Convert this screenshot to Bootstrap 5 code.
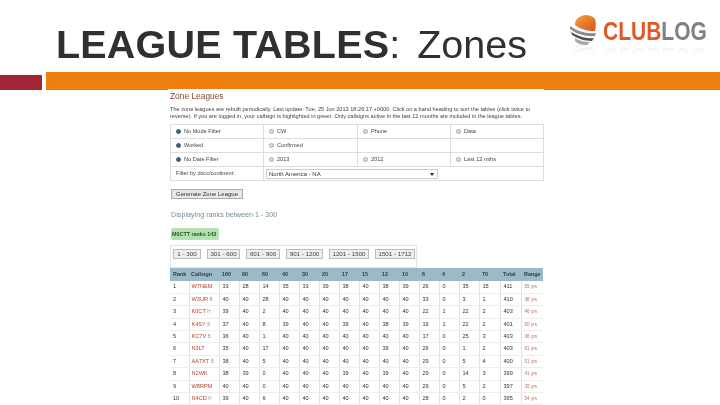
<!DOCTYPE html>
<html lang="en"><head><meta charset="utf-8"><title>League Tables: Zones</title>
<link href="https://cdn.jsdelivr.net/npm/bootstrap@5.3.0/dist/css/bootstrap.min.css" rel="stylesheet">
<style>
html,body{width:720px;height:405px;overflow:hidden;background:#fff;font-family:"Liberation Sans",Arial,sans-serif}
.slide-head{height:72px;padding:18px 14px 0 56px}
.slide-title{font:400 39.5px/52px "Liberation Sans",Arial,sans-serif;color:#303030;margin:0;filter:blur(.3px)}
.slide-title b{font-weight:700;letter-spacing:.2px}
.title-rest{margin-left:17px}
.brand{margin-top:-7px;-webkit-box-reflect:below -6px linear-gradient(transparent 60%,rgba(255,255,255,.16));filter:blur(.35px)}
.rule{height:18px;gap:4px}
.rule-red{width:42px;background:#a32638;height:15px;margin-top:3px}
.rule-orange{background:#ee7f0e;flex:1}
.shot{width:376px;margin-left:168px;background:#fff;padding:0 1px 0 2px;color:#444;font-size:5.6px;line-height:7px;filter:blur(.4px);height:316px;margin-top:-1px;overflow:hidden}
.shot-h{color:#7a4a3a;font-size:8.4px;line-height:10px;margin:0;padding-top:2px}
.shot-p{margin:5px 0 4px;height:14px;white-space:nowrap}
.filter-t{width:373px;table-layout:fixed;margin:0;border-color:#ddd;--bs-table-bg:transparent}
.filter-t td{height:14px;padding:0 0 0 5px;font-size:5.6px;line-height:13px;color:#444;white-space:nowrap}
.filter-t input{width:5px;height:5px;margin:0 3px 0 0;float:none;vertical-align:-.5px;border-color:#aaa;background-color:#ddd}
.filter-t input:checked{background-color:#3f5f72;border-color:#3f5f72;background-image:none}
.filter-t td.sel-cell{padding-left:2px}
.sel{display:block;width:172px;height:10px;margin-top:2px;padding:0 2px;border:1px solid #ccc;line-height:8px;font-size:6px;color:#333;position:relative}
.sel::after{content:"";position:absolute;right:3px;top:3px;border:2px solid transparent;border-top:3px solid #222}
.gen{display:block;margin:8px 0 0 1px;width:72px;height:10px;padding:0;border:1px solid #aaa;border-radius:0;background:#e8e8e8;font-size:6px;line-height:8px;color:#333}
.range-h{color:#6f8f97;font-size:7.2px;line-height:9px;margin:11px 0 0 1px}
.rank-tag{display:inline-block;margin:9px 0 0 1px;width:48px;height:12px;line-height:12px;padding-left:1px;background:#b4e3ae;border-radius:2px;font-size:5.4px;font-weight:700;color:#26552b;white-space:nowrap}
.pager{width:247px;height:23px;margin-top:5px;border:1px solid #e4e4e4;padding:3px 0 0 2px}
.pager .btn{flex:none;height:10px;padding:0;border:1px solid #bbb;border-radius:0;background:#eee;font-size:6.2px;line-height:8px;color:#444;margin-right:6px}
.pg-a{width:28px}.pg-b{width:33px}.pg-c{width:34px}.pg-d{width:37px}.pg-e{width:40px}
.data-t{width:373px;table-layout:fixed;margin:0;--bs-table-bg:transparent;border-color:#ddd}
.data-t th{background:#9cb9c8;height:13px;padding:0 0 1px 3px;font-size:5.4px;line-height:12px;color:#2c3c46;border:0;white-space:nowrap}
.data-t td{height:12.4px;padding:0 0 0 3px;font-size:5.6px;line-height:11px;color:#333;border-left:1px solid #e2e2e2;border-bottom:1px solid #eee;white-space:nowrap}
.data-t td:first-child{border-left:0}
.data-t .call{color:#b0432c;padding-left:2px}.data-t .call small{color:#999;font-size:4.5px}
.data-t th.hcall{padding-left:2px}
.data-t .yrs{color:#c0705a;font-size:4.6px}
</style></head><body>
<header class="slide-head d-flex justify-content-between align-items-start">
<h1 class="slide-title"><b>LEAGUE TABLES</b>:<span class="title-rest">Zones</span></h1>
<svg class="brand" width="140" height="36" viewBox="0 0 140 36" role="img" aria-label="Club Log">
<defs><linearGradient id="g" x1="0" y1="0" x2="1" y2="1"><stop offset="0" stop-color="#f2a33a"/><stop offset="1" stop-color="#d9541e"/></linearGradient></defs>
<path d="M9 14a11 9 0 0 1 20-6c1 3 1 6 0 12-8 0-15-2-20-6z" fill="url(#g)"/>
<path d="M4 15c7 5 16 8 26 7l-1 3c-9 1-18-2-25-7z" fill="#8a8d90"/>
<path d="M5 21c7 4 15 7 23 6l-2 3c-8 0-15-3-20-6z" fill="#4f5255"/>
<path d="M9 27c5 3 10 4 15 4l-3 3c-5 0-9-1-12-4z" fill="#a5a7a9"/>
<text transform="translate(37 29) scale(.84 1)" font-family="Liberation Sans" font-weight="700" font-size="25"><tspan fill="#e0592a">CLUB</tspan><tspan fill="#7d8084">LOG</tspan></text>
</svg>
</header>
<div class="rule d-flex"><div class="rule-red"></div><div class="rule-orange"></div></div>
<main class="shot">
<h2 class="shot-h">Zone Leagues</h2>
<p class="shot-p">The zone leagues are rebuilt periodically. Last update: Tue, 25 Jun 2013 18:26:17 +0000. Click on a band heading to sort the tables (click twice to<br>reverse). If you are logged in, your callsign is highlighted in green. Only callsigns active in the last 12 months are included in the league tables.</p>
<table class="table table-bordered filter-t"><colgroup><col style="width:93px"><col style="width:94px"><col style="width:93px"><col style="width:93px"></colgroup><tbody>
<tr><td><input class="form-check-input" type="radio" checked>No Mode Filter</td><td><input class="form-check-input" type="radio">CW</td><td><input class="form-check-input" type="radio">Phone</td><td><input class="form-check-input" type="radio">Data</td></tr>
<tr><td><input class="form-check-input" type="radio" checked>Worked</td><td><input class="form-check-input" type="radio">Confirmed</td><td></td><td></td></tr>
<tr><td><input class="form-check-input" type="radio" checked>No Date Filter</td><td><input class="form-check-input" type="radio">2013</td><td><input class="form-check-input" type="radio">2012</td><td><input class="form-check-input" type="radio">Last 12 mths</td></tr>
<tr><td>Filter by dxcc/continent:</td><td colspan="3" class="sel-cell"><span class="sel">North America - NA</span></td></tr>
</tbody></table>
<button class="btn gen" type="button">Generate Zone League</button>
<div class="range-h">Displaying ranks between 1 - 300</div>
<span class="rank-tag">M0CTT ranks 143</span>
<div class="pager d-flex"><a class="btn pg-a">1 - 300</a><a class="btn pg-b">301 - 600</a><a class="btn pg-c">601 - 900</a><a class="btn pg-d">901 - 1200</a><a class="btn pg-e">1201 - 1500</a><a class="btn pg-e">1501 - 1712</a></div>
<table class="table data-t"><colgroup><col style="width:19px"><col style="width:30px"><col style="width:20px"><col style="width:20px"><col style="width:20px"><col style="width:20px"><col style="width:20px"><col style="width:20px"><col style="width:20px"><col style="width:20px"><col style="width:20px"><col style="width:20px"><col style="width:20px"><col style="width:20px"><col style="width:20px"><col style="width:21px"><col style="width:21px"><col style="width:22px"></colgroup>
<thead><tr><th>Rank</th><th class="hcall">Callsign</th><th>160</th><th>80</th><th>60</th><th>40</th><th>30</th><th>20</th><th>17</th><th>15</th><th>12</th><th>10</th><th>6</th><th>4</th><th>2</th><th>70</th><th>Total</th><th>Range</th></tr></thead>
<tbody>
<tr><td>1</td><td class="call">W7NEM</td><td>33</td><td>28</td><td>14</td><td>35</td><td>33</td><td>39</td><td>38</td><td>40</td><td>38</td><td>39</td><td>26</td><td>0</td><td>35</td><td>15</td><td>411</td><td class="yrs">55 yrs</td></tr>
<tr><td>2</td><td class="call">W3UR <small>B</small></td><td>40</td><td>40</td><td>28</td><td>40</td><td>40</td><td>40</td><td>40</td><td>40</td><td>40</td><td>40</td><td>33</td><td>0</td><td>3</td><td>1</td><td>410</td><td class="yrs">38 yrs</td></tr>
<tr><td>3</td><td class="call">K0CT <small>H</small></td><td>39</td><td>40</td><td>2</td><td>40</td><td>40</td><td>40</td><td>40</td><td>40</td><td>40</td><td>40</td><td>22</td><td>1</td><td>22</td><td>2</td><td>403</td><td class="yrs">46 yrs</td></tr>
<tr><td>4</td><td class="call">K4SY <small>B</small></td><td>37</td><td>40</td><td>8</td><td>39</td><td>40</td><td>40</td><td>39</td><td>40</td><td>38</td><td>39</td><td>19</td><td>1</td><td>22</td><td>2</td><td>401</td><td class="yrs">50 yrs</td></tr>
<tr><td>5</td><td class="call">KC7V <small>B</small></td><td>36</td><td>40</td><td>1</td><td>40</td><td>40</td><td>40</td><td>40</td><td>40</td><td>40</td><td>40</td><td>17</td><td>0</td><td>25</td><td>3</td><td>403</td><td class="yrs">36 yrs</td></tr>
<tr><td>6</td><td class="call">N3LT</td><td>35</td><td>40</td><td>17</td><td>40</td><td>40</td><td>40</td><td>40</td><td>40</td><td>39</td><td>40</td><td>26</td><td>0</td><td>1</td><td>2</td><td>403</td><td class="yrs">61 yrs</td></tr>
<tr><td>7</td><td class="call">AA7XT <small>B</small></td><td>38</td><td>40</td><td>5</td><td>40</td><td>40</td><td>40</td><td>40</td><td>40</td><td>40</td><td>40</td><td>29</td><td>0</td><td>5</td><td>4</td><td>400</td><td class="yrs">51 yrs</td></tr>
<tr><td>8</td><td class="call">N2WK</td><td>38</td><td>39</td><td>0</td><td>40</td><td>40</td><td>40</td><td>39</td><td>40</td><td>39</td><td>40</td><td>29</td><td>0</td><td>14</td><td>3</td><td>399</td><td class="yrs">41 yrs</td></tr>
<tr><td>9</td><td class="call">W8RPM</td><td>40</td><td>40</td><td>0</td><td>40</td><td>40</td><td>40</td><td>40</td><td>40</td><td>40</td><td>40</td><td>29</td><td>0</td><td>5</td><td>2</td><td>397</td><td class="yrs">35 yrs</td></tr>
<tr><td>10</td><td class="call">N4CD <small>H</small></td><td>39</td><td>40</td><td>6</td><td>40</td><td>40</td><td>40</td><td>40</td><td>40</td><td>40</td><td>40</td><td>28</td><td>0</td><td>2</td><td>0</td><td>395</td><td class="yrs">54 yrs</td></tr>
</tbody></table>
</main>
</body></html>
